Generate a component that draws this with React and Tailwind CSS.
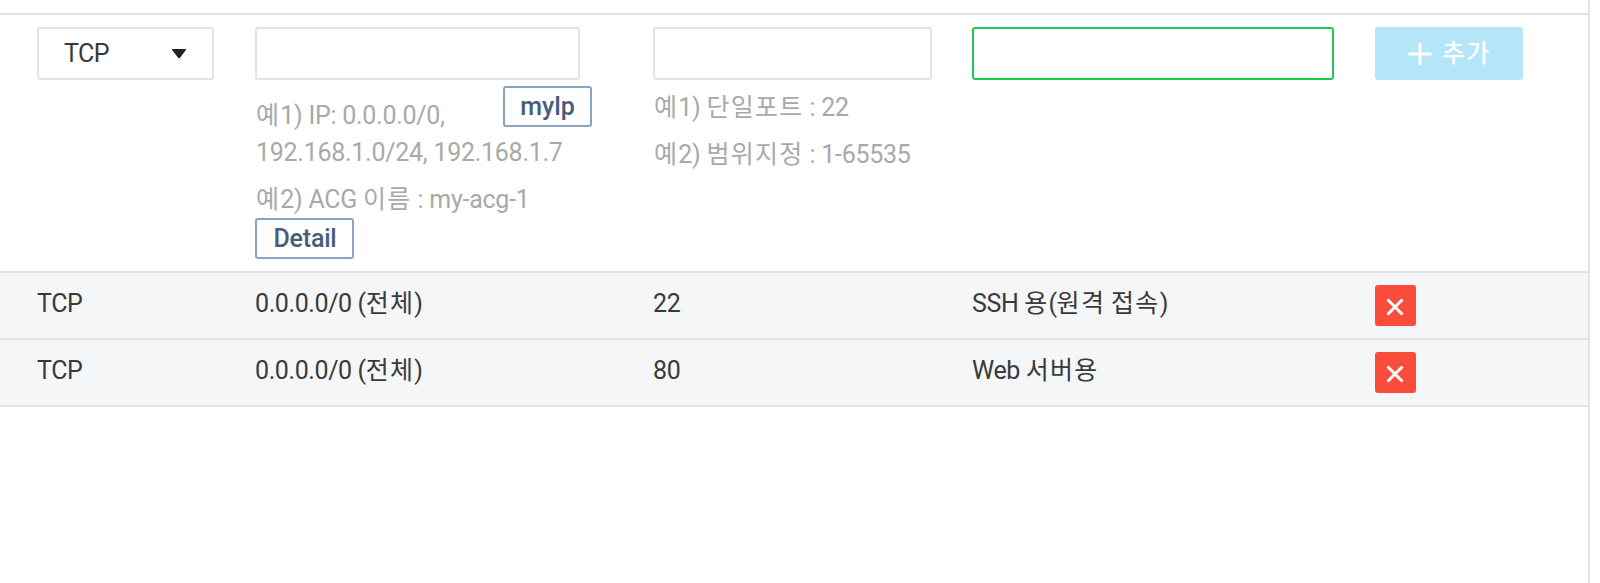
import React from "react";

const COLS = "grid grid-cols-[218px_398px_319px_403px_1fr] pl-[37px]";

const rules = [
	{ protocol: "TCP", source: "0.0.0.0/0 (전체)", port: "22", memo: "SSH 용(원격 접속)" },
	{ protocol: "TCP", source: "0.0.0.0/0 (전체)", port: "80", memo: "Web 서버용" },
];

// Hangul gets looser tracking than the Latin text around it
const Text = ({ children }) =>
	children.split(/([가-힣]+)/).map((part, i) =>
		i % 2 ? (
			<span key={i} className="tracking-[1.3px]">
				{part}
			</span>
		) : (
			part
		)
	);

const OutlineButton = ({ className, children }) => (
	<button
		className={`h-[41px] rounded-[3px] border-2 border-[#8ba3bf] bg-white font-medium leading-[36px] tracking-[-0.2px] text-[#475d7b] ${className}`}
	>
		{children}
	</button>
);

const Hint = ({ className, children }) => (
	<p className={`pl-px tracking-[-0.27px] ${className}`}>
		<Text>{children}</Text>
	</p>
);

const RuleForm = () => (
	<div className={`${COLS} h-[258px] border-t-2 border-[#e3e3e3] pt-3`}>
		{/* Protocol */}
		<div className="flex h-[53px] w-[177px] items-center justify-between rounded-[3px] border-2 border-[#e3e3e3] pl-[25px] pr-[25px]">
			<span className="text-[#3a3a3a] tracking-[-0.6px]">TCP</span>
			<svg width="16" height="10" viewBox="0 0 16 10">
				<path d="M1.6 0h12.8q1.4 0 .5 1.100L9.100 8.800q-1 1-2 0L1.100 1.100q-.9-1.100.5-1.100z" fill="#222" />
			</svg>
		</div>

		{/* Source */}
		<div className="w-[337px] text-[#a9a9a9]">
			<input className="block h-[53px] w-[325px] rounded-[3px] border-2 border-[#e3e3e3] px-3 outline-none" />
			<div className="flex items-start justify-between">
				<Hint className="mt-[17px]">예1) IP: 0.0.0.0/0,</Hint>
				<OutlineButton className="mt-[6px] w-[89px]">myIp</OutlineButton>
			</div>
			<Hint>192.168.1.0/24, 192.168.1.7</Hint>
			<Hint className="mt-[10px]">예2) ACG 이름 : my-acg-1</Hint>
			<OutlineButton className="block w-[99px] pl-px">Detail</OutlineButton>
		</div>

		{/* Port */}
		<div className="text-[#a9a9a9]">
			<input className="block h-[53px] w-[279px] rounded-[3px] border-2 border-[#e3e3e3] px-3 outline-none" />
			<Hint className="mt-[9px]">예1) 단일포트 : 22</Hint>
			<Hint className="mt-[10px]">예2) 범위지정 : 1-65535</Hint>
		</div>

		{/* Memo */}
		<div>
			<input className="block h-[53px] w-[362px] rounded-[3px] border-2 border-[#1cc94f] px-3 outline-none" />
		</div>

		<button className="flex h-[53px] w-[148px] items-center gap-[10px] rounded-[3px] bg-[#b5e5f8] pl-[33px] font-medium text-white">
			<svg width="24" height="24" viewBox="0 0 24 24" stroke="#fff" strokeWidth="3">
				<path d="M12 1v22M0.500 12h23" />
			</svg>
			<Text>추가</Text>
		</button>
	</div>
);

const RuleRow = ({ rule }) => (
	<div className={`${COLS} h-[67px] border-t-2 border-[#e3e3e3] bg-[#f5f6f8] pt-3 tracking-[-0.4px] text-[#3a3a3a]`}>
		<span>{rule.protocol}</span>
		<span>
			<Text>{rule.source}</Text>
		</span>
		<span>{rule.port}</span>
		<span>
			<Text>{rule.memo}</Text>
		</span>
		<button className="flex h-[41px] w-[41px] items-center justify-center rounded-[3px] bg-[#fa4c3b] pt-[2px] pr-px">
			<svg width="18" height="18" viewBox="0 0 18 18" stroke="#fff" strokeWidth="3">
				<path d="M1.500 1.500l15 15M16.500 1.500l-15 15" />
			</svg>
		</button>
	</div>
);

const App = () => (
	<div className="h-[583px] w-full overflow-hidden bg-white pr-[10px] font-['Roboto','Noto_Sans_CJK_KR',sans-serif] text-[25px] leading-[37px]">
		<div className="h-full border-r-2 border-[#e3e3e3] pt-[13px]">
			<RuleForm />
			<div className="border-b-2 border-[#e3e3e3]">
				{rules.map((rule) => (
					<RuleRow key={rule.port} rule={rule} />
				))}
			</div>
		</div>
	</div>
);

export default App;
